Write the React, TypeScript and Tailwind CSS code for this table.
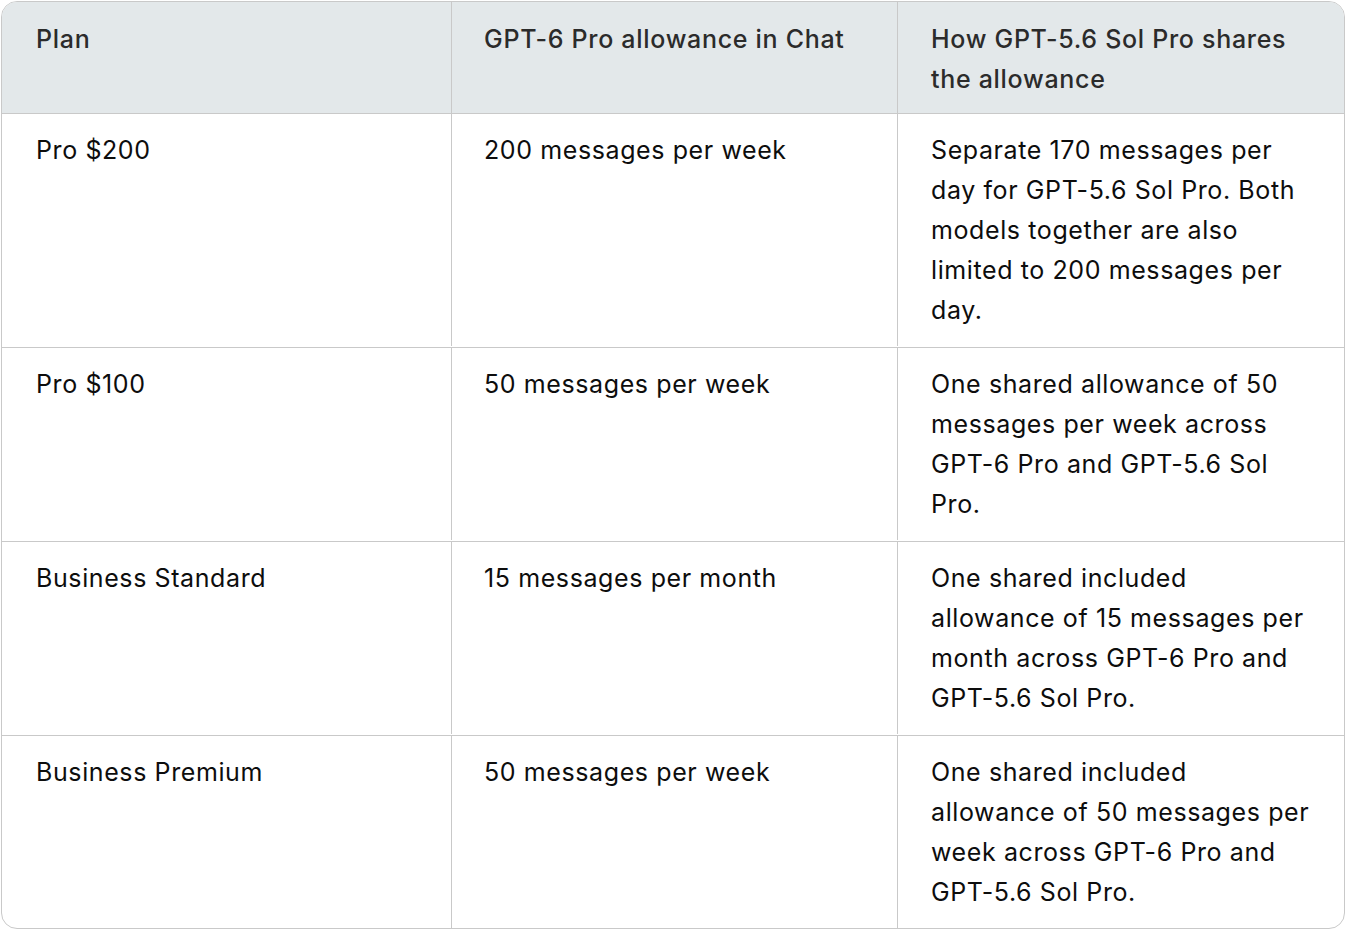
import React from "react";

const rows: { plan: string; allowance: string; shares: string[] }[] = [
  {
    plan: "Pro $200",
    allowance: "200 messages per week",
    shares: [
      "Separate 170 messages per",
      "day for GPT-5.6 Sol Pro. Both",
      "models together are also",
      "limited to 200 messages per",
      "day.",
    ],
  },
  {
    plan: "Pro $100",
    allowance: "50 messages per week",
    shares: [
      "One shared allowance of 50",
      "messages per week across",
      "GPT-6 Pro and GPT-5.6 Sol",
      "Pro.",
    ],
  },
  {
    plan: "Business Standard",
    allowance: "15 messages per month",
    shares: [
      "One shared included",
      "allowance of 15 messages per",
      "month across GPT-6 Pro and",
      "GPT-5.6 Sol Pro.",
    ],
  },
  {
    plan: "Business Premium",
    allowance: "50 messages per week",
    shares: [
      "One shared included",
      "allowance of 50 messages per",
      "week across GPT-6 Pro and",
      "GPT-5.6 Sol Pro.",
    ],
  },
];

export default function App() {
  return (
    <div
      className="bg-white w-[1346px] h-[930px] p-px"
      style={{ fontFamily: "Inter, 'Noto Sans', sans-serif" }}
    >
      <div className="w-[1344px] border border-[#c9c9c9] rounded-[16px] overflow-hidden">
        <div className="grid grid-cols-[449px_446px_447px] bg-[#e3e8ea] text-[#2b2b2b] font-medium text-[25px] leading-[40px] tracking-[0.7px]">
          <div className="pt-[17px] pb-[14px] pl-[34px] pr-2">Plan</div>
          <div className="pt-[17px] pb-[14px] pl-[32px] pr-2 border-l border-[#c9c9c9]">GPT-6 Pro allowance in Chat</div>
          <div className="pt-[17px] pb-[14px] pl-[33px] pr-2 border-l border-[#c9c9c9]">
            <span className="block whitespace-nowrap">How GPT-5.6 Sol Pro shares</span>
            <span className="block whitespace-nowrap">the allowance</span>
          </div>
        </div>
        {rows.map((r, idx) => (
          <div
            key={r.plan}
            className={
              "grid grid-cols-[449px_446px_447px] border-t border-[#c9c9c9] text-[#0d0d0d] text-[25px] leading-[40px] tracking-[0.6px] " +
              (idx === rows.length - 1 ? "pb-0" : "pb-px")
            }
          >
            <div className="pt-4 pb-4 pl-[34px] pr-2">{r.plan}</div>
            <div className="pt-4 pb-4 pl-[32px] pr-2 border-l border-[#c9c9c9]">{r.allowance}</div>
            <div className="pt-4 pb-4 pl-[33px] pr-2 border-l border-[#c9c9c9]">
              {r.shares.map((s, i) => (
                <span key={i} className="block whitespace-nowrap">
                  {s}
                </span>
              ))}
            </div>
          </div>
        ))}
      </div>
    </div>
  );
}
